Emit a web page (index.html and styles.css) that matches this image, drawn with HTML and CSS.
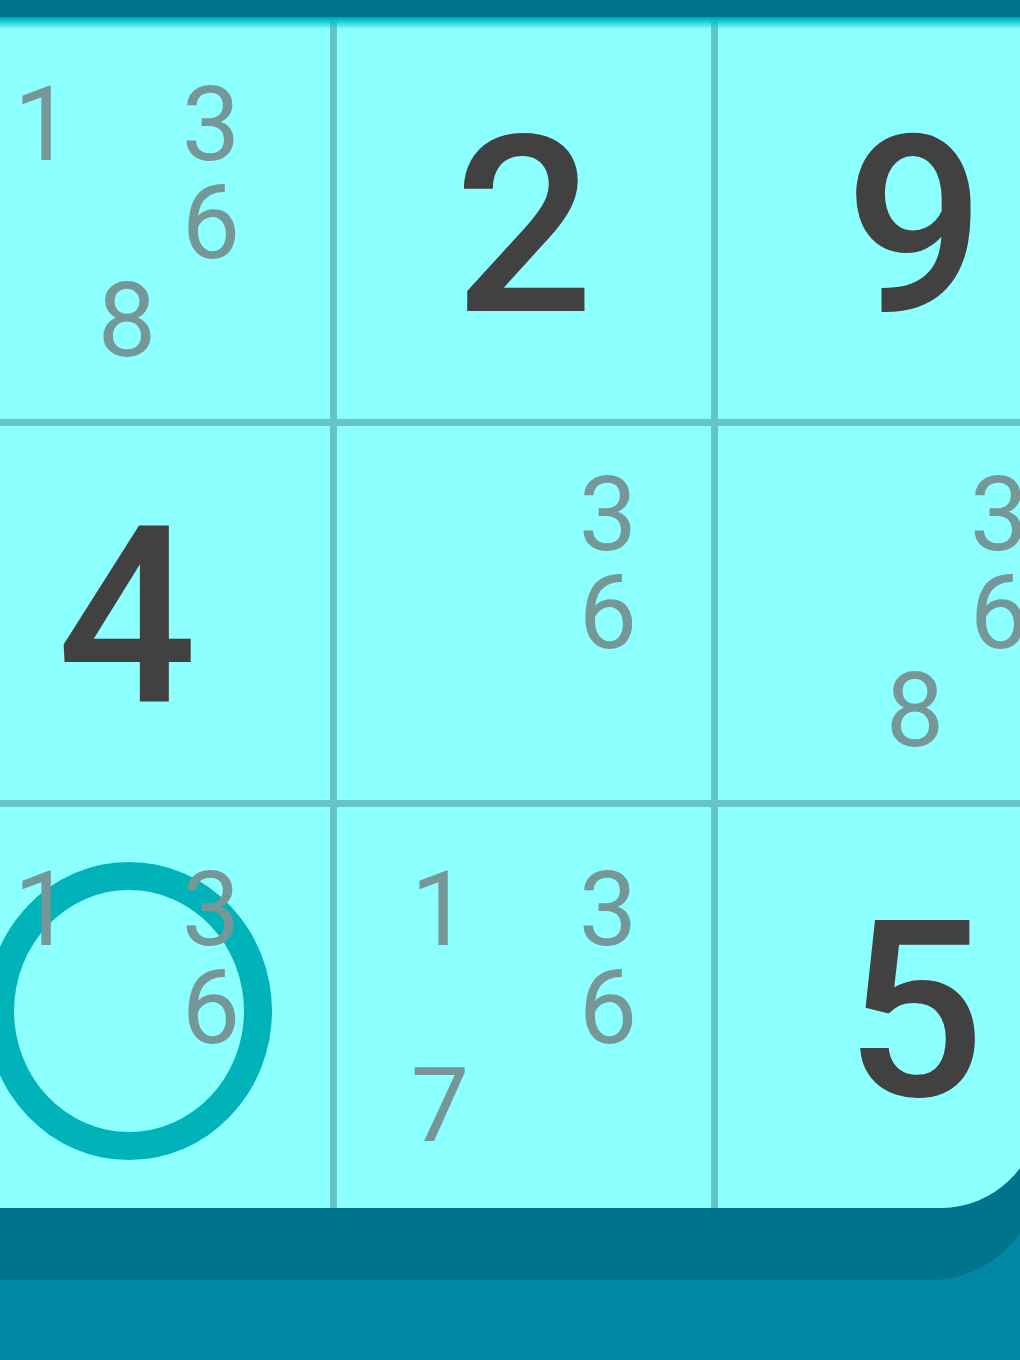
FILE: index.html
```html
<!DOCTYPE html>
<html lang="en">
<head>
<meta charset="utf-8">
<title>Sudoku</title>
<link rel="stylesheet" href="styles.css">
</head>
<body>
<div class="frame">
  <div class="board">
    <div class="grid">
      <div class="cell row-first">
        <div class="notes">
          <span>1</span><span></span><span>3</span>
          <span></span><span></span><span>6</span>
          <span></span><span>8</span><span></span>
        </div>
      </div>
      <div class="cell row-first"><span class="value">2</span></div>
      <div class="cell row-first"><span class="value">9</span></div>

      <div class="cell"><span class="value">4</span></div>
      <div class="cell">
        <div class="notes">
          <span></span><span></span><span>3</span>
          <span></span><span></span><span>6</span>
          <span></span><span></span><span></span>
        </div>
      </div>
      <div class="cell">
        <div class="notes">
          <span></span><span></span><span>3</span>
          <span></span><span></span><span>6</span>
          <span></span><span>8</span><span></span>
        </div>
      </div>

      <div class="cell selected">
        <div class="ring"></div>
        <div class="notes">
          <span>1</span><span></span><span>3</span>
          <span></span><span></span><span>6</span>
          <span></span><span></span><span></span>
        </div>
      </div>
      <div class="cell">
        <div class="notes">
          <span>1</span><span></span><span>3</span>
          <span></span><span></span><span>6</span>
          <span>7</span><span></span><span></span>
        </div>
      </div>
      <div class="cell"><span class="value">5</span></div>
    </div>
  </div>
</div>
</body>
</html>
```

FILE: styles.css
```css
html, body {
  margin: 0;
  padding: 0;
  overflow: hidden;
}

body {
  width: 1020px;
  height: 1360px;
  background: #0087a5;
  font-family: Roboto, "Open Sans", sans-serif;
}

.frame {
  width: 1040px;
  padding-top: 17px;
  padding-bottom: 72px;
  background: #00738d;
  border-bottom-right-radius: 110px;
}

.board {
  position: relative;
  width: 1040px;
  height: 1191px;
  background: #8cffff;
  border-bottom-right-radius: 100px;
  overflow: hidden;
}

.board::after {
  content: "";
  position: absolute;
  left: 0;
  right: 0;
  top: 0;
  height: 12px;
  background: linear-gradient(to bottom, #009fb0 0, #00c4cc 3px, rgba(140, 255, 255, 0) 12px);
  pointer-events: none;
}

.grid {
  display: grid;
  grid-template-columns: 406px 374px 394px;
  grid-template-rows: 402px 374px 401px;
  gap: 7px;
  margin-left: -76px;
  width: 1188px;
  background: #66c4c7;
}

.cell {
  position: relative;
  display: flex;
  align-items: center;
  justify-content: center;
  background: #8cffff;
  box-sizing: border-box;
}

.row-first {
  padding-top: 10px;
}

.value {
  font-size: 246px;
  font-weight: 500;
  line-height: 1;
  color: #414141;
  position: relative;
  top: 4px;
}

.notes {
  position: relative;
  z-index: 1;
  display: grid;
  grid-template-columns: repeat(3, 84px);
  grid-template-rows: repeat(3, 98px);
}

.notes span {
  display: flex;
  align-items: center;
  justify-content: center;
  font-size: 104px;
  font-weight: 400;
  line-height: 1;
  color: #769797;
}

.ring {
  position: absolute;
  left: 50%;
  top: 50%;
  width: 286px;
  height: 298px;
  margin-left: -141px;
  margin-top: -146px;
  box-sizing: border-box;
  border: 28px solid #00b3b9;
  border-radius: 50%;
}
```
